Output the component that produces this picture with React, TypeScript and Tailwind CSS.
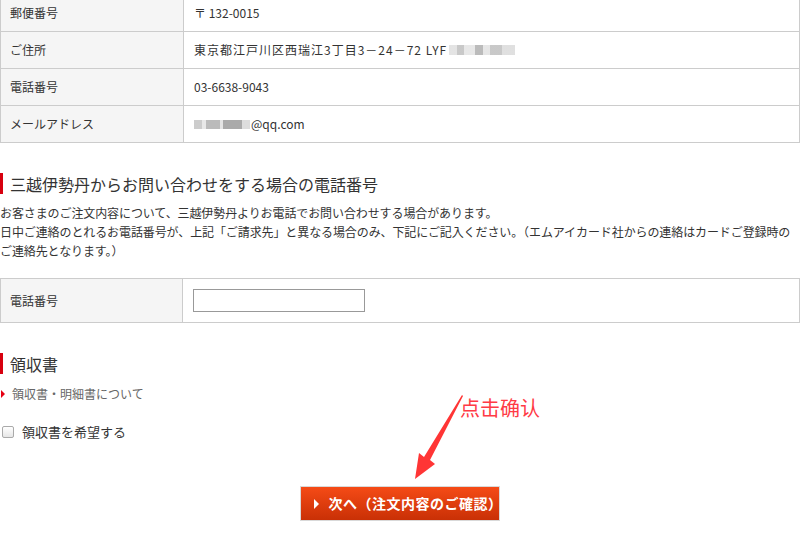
import { ReactNode } from 'react'

const rows: { label: string; value: ReactNode }[] = [
  { label: '郵便番号', value: '〒 132-0015' },
  {
    label: 'ご住所',
    value: (
      <span className="flex items-center">
        <span className="tracking-[1px]">東京都江戸川区西瑞江3丁目3－24－72 LYF</span>
        <span className="ml-[2px] inline-block h-[10px] w-[66px] bg-[linear-gradient(90deg,#ddd_0_12%,#bbb_12%_22%,#e2e2e2_22%_40%,#aaa_40%_52%,#e0e0e0_52%_62%,#bbb_62%_80%,#d8d8d8_80%)] opacity-80" />
      </span>
    ),
  },
  { label: '電話番号', value: '03-6638-9043' },
  {
    label: 'メールアドレス',
    value: (
      <span className="flex items-center">
        <span className="mr-[1px] inline-block h-[9px] w-[56px] bg-[linear-gradient(90deg,#ccc_0_14%,#e8e8e8_14%_22%,#bbb_22%_46%,#e4e4e4_46%_52%,#aaa_52%_86%,#ddd_86%)]" />
        @qq.com
      </span>
    ),
  },
]

function Heading({ children }: { children: ReactNode }) {
  return (
    <div className="flex h-[21px] items-center">
      <span className="h-full w-[3px] bg-[#d7000f]" />
      <span className="ml-[7px] text-[16px] leading-none text-[#333]">{children}</span>
    </div>
  )
}

export default function App() {
  return (
    <div
      className="relative h-[547px] w-[807px] overflow-hidden bg-white text-[12px] text-[#333]"
      style={{ fontFamily: '"Noto Sans CJK JP", "Noto Sans", sans-serif' }}
    >
      <div className="-mt-[5px] w-[800px] border-x border-[#ccc]">
        {rows.map((r) => (
          <div key={r.label} className="flex h-[37px] border-b border-[#ccc]">
            <div className="flex w-[183px] items-center border-r border-[#ccc] bg-[#f5f5f5] pl-[9px]">
              {r.label}
            </div>
            <div className="flex flex-1 items-center pl-[10px]">{r.value}</div>
          </div>
        ))}
      </div>

      <div className="mt-[30px]">
        <Heading>三越伊勢丹からお問い合わせをする場合の電話番号</Heading>
      </div>
      <p className="mt-[9px] whitespace-nowrap text-[12px] leading-[19px] tracking-[-0.1px]">
        お客さまのご注文内容について、三越伊勢丹よりお電話でお問い合わせする場合があります。
        <br />
        日中ご連絡のとれるお電話番号が、上記「ご請求先」と異なる場合のみ、下記にご記入ください。（エムアイカード社からの連絡はカードご登録時の
        <br />
        ご連絡先となります。）
      </p>

      <div className="mt-[18px] flex h-[45px] w-[800px] border border-[#ccc]">
        <div className="flex w-[182px] items-center border-r border-[#ccc] bg-[#f5f5f5] pl-[9px]">
          電話番号
        </div>
        <div className="flex flex-1 items-center pl-[10px]">
          <input type="text" className="h-[23px] w-[172px] border border-[#999] bg-white outline-none" />
        </div>
      </div>

      <div className="mt-[30px]">
        <Heading>領収書</Heading>
      </div>
      <div className="mt-[11px] flex items-center text-[#666]">
        <span className="ml-[1px] h-0 w-0 border-y-[4px] border-l-[4px] border-y-transparent border-l-[#e60012]" />
        <span className="ml-[7px] leading-[18px]">領収書・明細書について</span>
      </div>
      <label className="mt-[20px] flex items-center">
        <span className="ml-[2px] h-[12px] w-[12px] rounded-[2px] border border-[#aaa] bg-[linear-gradient(#fff,#e6e6e6)]" />
        <span className="ml-[8px] text-[13px] leading-[18px]">領収書を希望する</span>
      </label>

      <div className="mt-[45px] flex justify-center pr-[8px]">
        <button className="flex h-[35px] w-[200px] items-center border border-[#d9d9d9] bg-[linear-gradient(#f54b16,#c93006)] pl-[13px] text-[14px] font-bold text-white">
          <span className="h-0 w-0 border-y-[5px] border-l-[5px] border-y-transparent border-l-white" />
          <span className="ml-[10px] tracking-[0.5px]">次へ（注文内容のご確認）</span>
        </button>
      </div>

      <div
        className="absolute left-[460px] top-[396px] text-[20px] leading-[24px] text-[#ff3a45]"
        style={{ fontFamily: '"Noto Sans CJK SC", sans-serif' }}
      >
        点击确认
      </div>
      <svg className="absolute left-[405px] top-[390px]" width="65" height="95" viewBox="0 0 65 95">
        <polygon points="57,5 58,6 25,70 30,74 10,89 14,63 19,67" fill="#ff3535" />
      </svg>
    </div>
  )
}
